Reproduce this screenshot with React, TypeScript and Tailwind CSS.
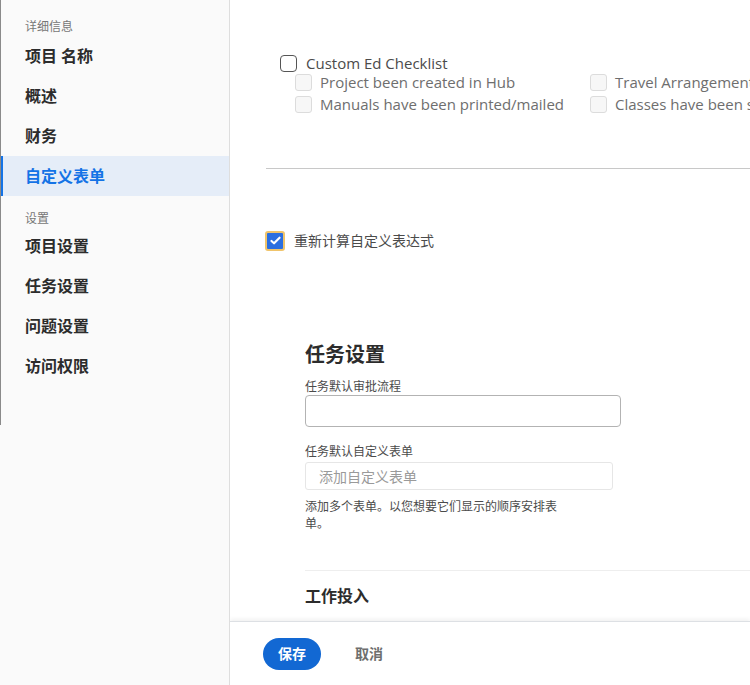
const font = { fontFamily: '"Lato", "Noto Sans CJK SC", sans-serif' };
const latin = { fontFamily: '"Open Sans", "Noto Sans CJK SC", sans-serif' };

const detailItems = ["项目 名称", "概述", "财务", "自定义表单"];
const settingItems = ["项目设置", "任务设置", "问题设置", "访问权限"];

function NavItem({ label, active }: { label: string; active?: boolean }) {
  return (
    <div
      className={`flex h-10 items-center border-l-[3px] pl-[22px] text-[16px] font-bold ${
        active ? "border-[#1473e6] bg-[#e5edf8] text-[#1473e6]" : "border-transparent text-[#2c2c2c]"
      }`}
    >
      {label}
    </div>
  );
}

function SubCheck({ label }: { label: string }) {
  return (
    <div className="flex h-[22px] items-center gap-2 whitespace-nowrap">
      <span className="h-[17px] w-[17px] shrink-0 rounded-[3px] border border-[#dcdcdc] bg-[#f7f7f7]" />
      <span className="text-[15px] text-[#6e6e6e]" style={latin}>{label}</span>
    </div>
  );
}

export default function App() {
  return (
    <div className="flex h-[685px] w-[750px] overflow-hidden bg-white" style={font}>
      {/* sidebar */}
      <aside className="relative w-[230px] shrink-0 border-r border-[#dedede] bg-[#fafafa]">
        <div className="absolute left-0 top-0 h-[425px] w-[1px] bg-[#8a8a8a]" />
        <div className="pt-[19px]">
          <div className="pl-[25px] text-[12px] leading-[16px] text-[#777]">详细信息</div>
          <div className="mt-[1px]">
            {detailItems.map((item) => (
              <NavItem key={item} label={item} active={item === "自定义表单"} />
            ))}
          </div>
          <div className="mt-[15px] pl-[25px] text-[12px] leading-[16px] text-[#777]">设置</div>
          <div className="mt-[-1px]">
            {settingItems.map((item) => (
              <NavItem key={item} label={item} />
            ))}
          </div>
        </div>
      </aside>

      {/* main */}
      <div className="flex min-w-0 flex-1 flex-col">
        <div className="flex-1 overflow-hidden">
          <div className="pl-[50px] pt-[54px]">
            <div className="flex h-[18px] items-center gap-[9px]">
              <span className="h-[17px] w-[17px] rounded-[4px] border-[1.5px] border-[#555]" />
              <span className="text-[15px] text-[#4b4b4b]" style={latin}>Custom Ed Checklist</span>
            </div>
            <div className="ml-[15px] mt-[-1px] grid w-[600px] grid-cols-[295px_1fr]">
              <SubCheck label="Project been created in Hub" />
              <SubCheck label="Travel Arrangements" />
              <SubCheck label="Manuals have been printed/mailed" />
              <SubCheck label="Classes have been scheduled" />
            </div>
          </div>

          <div className="ml-[36px] mt-[53px] h-px bg-[#c8c8c8]" />

          <div className="ml-[35px] mt-[61px] flex items-center gap-[9px]">
            <span className="flex h-[20px] w-[20px] items-center justify-center rounded-[3px] border-2 border-[#f0c46b] bg-[#2c6fe0]">
              <svg viewBox="0 0 16 16" className="h-[13px] w-[13px]" fill="none" stroke="white" strokeWidth="2.6" strokeLinecap="round" strokeLinejoin="round">
                <path d="M3 8.5l3.2 3L13 4.5" />
              </svg>
            </span>
            <span className="text-[14px] text-[#4b4b4b]">重新计算自定义表达式</span>
          </div>

          <div className="ml-[75px] mt-[90px] w-[316px]">
            <h2 className="text-[20px] font-bold leading-[26px] text-[#2c2c2c]">任务设置</h2>
            <div className="mt-[12px] text-[12px] leading-[16px] text-[#4b4b4b]">任务默认审批流程</div>
            <div className="mt-0 h-[32px] w-[316px] rounded-[4px] border border-[#b3b3b3] bg-white" />
            <div className="mt-[17px] text-[12px] leading-[16px] text-[#4b4b4b]">任务默认自定义表单</div>
            <div className="mt-[2px] flex h-[28px] w-[308px] items-center rounded-[3px] border border-[#e6e6e6] bg-white pl-[13px] text-[14px] text-[#9a9a9a]">
              添加自定义表单
            </div>
            <p className="mt-[8px] w-[262px] text-[12px] leading-[17px] text-[#4b4b4b]">
              添加多个表单。以您想要它们显示的顺序安排表单。
            </p>
          </div>

          <div className="ml-[75px] mt-[38px] h-px bg-[#eeeeee]" />
          <div className="ml-[75px] mt-[13px] text-[16px] font-bold leading-[24px] text-[#2c2c2c]">工作投入</div>
        </div>

        {/* footer */}
        <div className="flex h-[64px] shrink-0 items-center gap-[34px] border-t border-[#dde0e4] bg-white pl-[33px] shadow-[0_-2px_4px_rgba(0,0,0,0.06)]">
          <button type="button" className="h-[32px] w-[58px] rounded-full bg-[#1268d3] text-[14px] font-bold text-white">
            保存
          </button>
          <button type="button" className="text-[14px] font-bold text-[#6e6e6e]">
            取消
          </button>
        </div>
      </div>
    </div>
  );
}
